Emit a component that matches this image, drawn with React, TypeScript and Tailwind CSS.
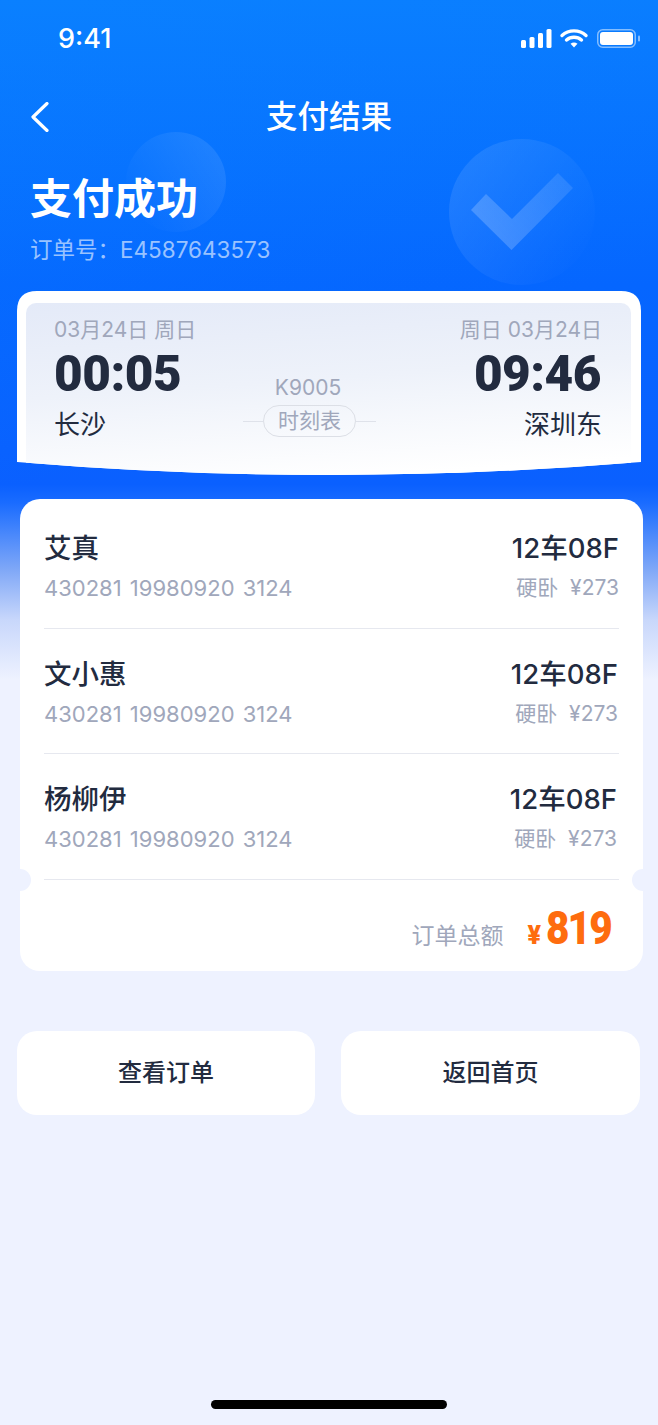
const CJK = "font-['Inter','Noto_Sans_CJK_SC',sans-serif]";

const passengers = [
  { name: "艾真", inset: "pr-0" },
  { name: "文小惠", inset: "pr-[1px]" },
  { name: "杨柳伊", inset: "pr-[2px]" },
];

function StatusIcons() {
  return (
    <svg width="120" height="20" viewBox="0 0 120 20" fill="none">
      <rect x="0" y="11" width="5" height="8" rx="1.5" fill="#fff" />
      <rect x="8.5" y="8" width="5" height="11" rx="1.5" fill="#fff" />
      <rect x="17" y="4" width="5" height="15" rx="1.5" fill="#fff" />
      <rect x="25.5" y="0" width="5" height="19" rx="1.5" fill="#fff" />
      <path d="M41 6.5a18 18 0 0 1 24 0" stroke="#fff" strokeWidth="3.4" strokeLinecap="round" />
      <path d="M45.5 11a11.5 11.5 0 0 1 15 0" stroke="#fff" strokeWidth="3.4" strokeLinecap="round" />
      <path d="M49.5 14.8a6 6 0 0 1 7 0L53 18.6z" fill="#fff" />
      <rect x="76.75" y="0.75" width="37.5" height="17.5" rx="5" stroke="#fff" strokeOpacity="0.5" strokeWidth="1.5" />
      <rect x="79" y="3" width="33" height="13" rx="3" fill="#fff" />
      <rect x="117" y="6.5" width="2" height="6" rx="1" fill="#fff" fillOpacity="0.5" />
    </svg>
  );
}

function Decorations() {
  return (
    <svg className="absolute left-0 top-0" width="658" height="300" viewBox="0 0 658 300" fill="none">
      <defs>
        <linearGradient id="small" x1="226" y1="150" x2="130" y2="210" gradientUnits="userSpaceOnUse">
          <stop offset="0" stopColor="#fff" stopOpacity="0.1" />
          <stop offset="1" stopColor="#fff" stopOpacity="0" />
        </linearGradient>
        <linearGradient id="big" x1="455" y1="170" x2="590" y2="260" gradientUnits="userSpaceOnUse">
          <stop offset="0" stopColor="#fff" stopOpacity="0.1" />
          <stop offset="1" stopColor="#fff" stopOpacity="0" />
        </linearGradient>
        <linearGradient id="tick" x1="471" y1="240" x2="573" y2="175" gradientUnits="userSpaceOnUse">
          <stop offset="0" stopColor="#fff" stopOpacity="0.22" />
          <stop offset="1" stopColor="#fff" stopOpacity="0.1" />
        </linearGradient>
      </defs>
      <circle cx="176" cy="182" r="50" fill="url(#small)" />
      <circle cx="522" cy="212" r="73" fill="url(#big)" />
      <path d="M471 210L486 194L512 219L558 173L573 188L511.5 250Z" fill="url(#tick)" />
    </svg>
  );
}

function TicketHeader() {
  return (
    <div className="relative mx-[17px] mt-[26px] h-[184px] bg-white pl-[9px] pr-[10px] pt-[12px] [clip-path:path('M0_20Q0_0_20_0H604Q624_0_624_20V171Q312_197_0_171Z')]">
      <div className="flex h-[172px] rounded-t-[10px] bg-[linear-gradient(176deg,#e4eaf8_0%,#eef2fa_45%,#ffffff_92%)] pl-[28px] pr-[29px] pt-[13px]">
        <div className="flex w-[189px] flex-col">
          <span className="text-[21px] leading-[28px] text-[#a0a7bb]">03月24日 周日</span>
          <span className="mt-[6px] font-['Roboto',sans-serif] text-[49.5px] leading-[48px] font-black tracking-[-0.5px] text-[#222b3f]">
            00:05
          </span>
          <span className="mt-[10px] text-[26px] leading-[34px] text-[#222b3f]">长沙</span>
        </div>
        <div className="flex flex-col items-center pt-[58px]">
          <span className="pr-[3px] text-[21px] leading-[28px] text-[#a0a7bb]">K9005</span>
          <div className="mt-[3px] flex items-center">
            <span className="h-px w-[20px] bg-[#dfe2ea]" />
            <span className="flex h-[32px] w-[93px] items-center justify-center rounded-full border border-[#dcdfe6] text-[21px] text-[#a0a7bb]">
              时刻表
            </span>
            <span className="h-px w-[20px] bg-[#dfe2ea]" />
          </div>
        </div>
        <div className="flex flex-1 flex-col items-end">
          <span className="text-[21px] leading-[28px] text-[#a0a7bb]">周日 03月24日</span>
          <span className="mt-[6px] pr-[1px] font-['Roboto',sans-serif] text-[49.5px] leading-[48px] font-black tracking-[-0.5px] text-[#222b3f]">
            09:46
          </span>
          <span className="mt-[10px] text-[26px] leading-[34px] text-[#222b3f]">深圳东</span>
        </div>
      </div>
    </div>
  );
}

function PassengerRow({ name, inset }: { name: string; inset: string }) {
  return (
    <div className="h-[125.5px] border-b border-[#e6e8ef] pt-[25px]">
      <div className="flex items-center justify-between">
        <span className="text-[27.5px] leading-[40px] font-medium text-[#222b3f]">{name}</span>
        <span className={`text-[27.5px] leading-[40px] font-medium text-[#222b3f] ${inset}`}>12车08F</span>
      </div>
      <div className="flex items-center justify-between">
        <span className="text-[22px] leading-[40px] text-[#a0a7bb] [word-spacing:2px]">430281 19980920 3124</span>
        <span className={`text-[21px] leading-[40px] text-[#a0a7bb] [word-spacing:6px] ${inset}`}>硬卧 ¥273</span>
      </div>
    </div>
  );
}

export default function App() {
  return (
    <div
      className={`relative h-[1425px] w-[658px] overflow-hidden bg-[linear-gradient(160deg,rgba(10,140,255,0.25)_0%,transparent_30%),linear-gradient(180deg,#0a7cff_0%,#0566ff_20%,#0a60ff_34%,#1a6cff_35.3%,#80a8f7_40%,#c8d7fb_43.5%,#eef2ff_47.7%)] ${CJK}`}
    >
      <Decorations />

      <div className="relative flex h-[78px] items-start justify-between pl-[58px] pr-[17px] pt-[29px]">
        <span className="font-['Inter',sans-serif] text-[27px] leading-[20px] font-medium text-white">9:41</span>
        <StatusIcons />
      </div>

      <div className="relative flex h-[78px] items-center justify-center">
        <svg className="absolute left-[31px] top-[24px]" width="18" height="30" viewBox="0 0 18 30" fill="none">
          <path d="M16 1.5L2 15L16 28.5" stroke="#fff" strokeWidth="3.2" strokeLinecap="round" strokeLinejoin="round" />
        </svg>
        <span className="text-[31.5px] font-medium text-white">支付结果</span>
      </div>

      <div className="relative flex flex-col pl-[30px] pt-[15px]">
        <span className="text-[42px] leading-[56px] font-bold text-white">支付成功</span>
        <span className="mt-[8px] text-[22.5px] leading-[30px] text-white/60">订单号：E4587643573</span>
      </div>

      <TicketHeader />

      <div className="relative ml-[20px] mt-[24px] h-[472px] w-[623px] rounded-[20px] bg-white px-[24px] pt-[4px]">
        {passengers.map((p) => (
          <PassengerRow key={p.name} name={p.name} inset={p.inset} />
        ))}
        <div className="flex items-baseline justify-end pr-[8px] pt-[25px]">
          <span className="text-[23px] leading-[46px] text-[#a0a7bb]">订单总额</span>
          <span className="ml-[24px] font-['Roboto',sans-serif] text-[25px] font-black text-[#fe6c0e]">¥</span>
          <span className="-ml-[4px] origin-right scale-x-[0.88] font-['Roboto',sans-serif] text-[46px] leading-[46px] font-black tracking-[-2px] text-[#fe6c0e]">819</span>
        </div>
        <span className="absolute -left-[11px] top-[370px] size-[22px] rounded-full bg-[#eef2ff]" />
        <span className="absolute -right-[11px] top-[370px] size-[22px] rounded-full bg-[#eef2ff]" />
      </div>

      <div className="mx-[17px] mt-[60px] flex gap-[26px]">
        <button className="flex h-[84px] w-[298px] items-center justify-center rounded-[20px] bg-white text-[24px] font-medium text-[#222b3f]">
          查看订单
        </button>
        <button className="flex h-[84px] w-[299px] items-center justify-center rounded-[20px] bg-white text-[24px] font-medium text-[#222b3f]">
          返回首页
        </button>
      </div>

      <div className="absolute bottom-[16px] left-[211px] h-[9px] w-[236px] rounded-full bg-black" />
    </div>
  );
}
